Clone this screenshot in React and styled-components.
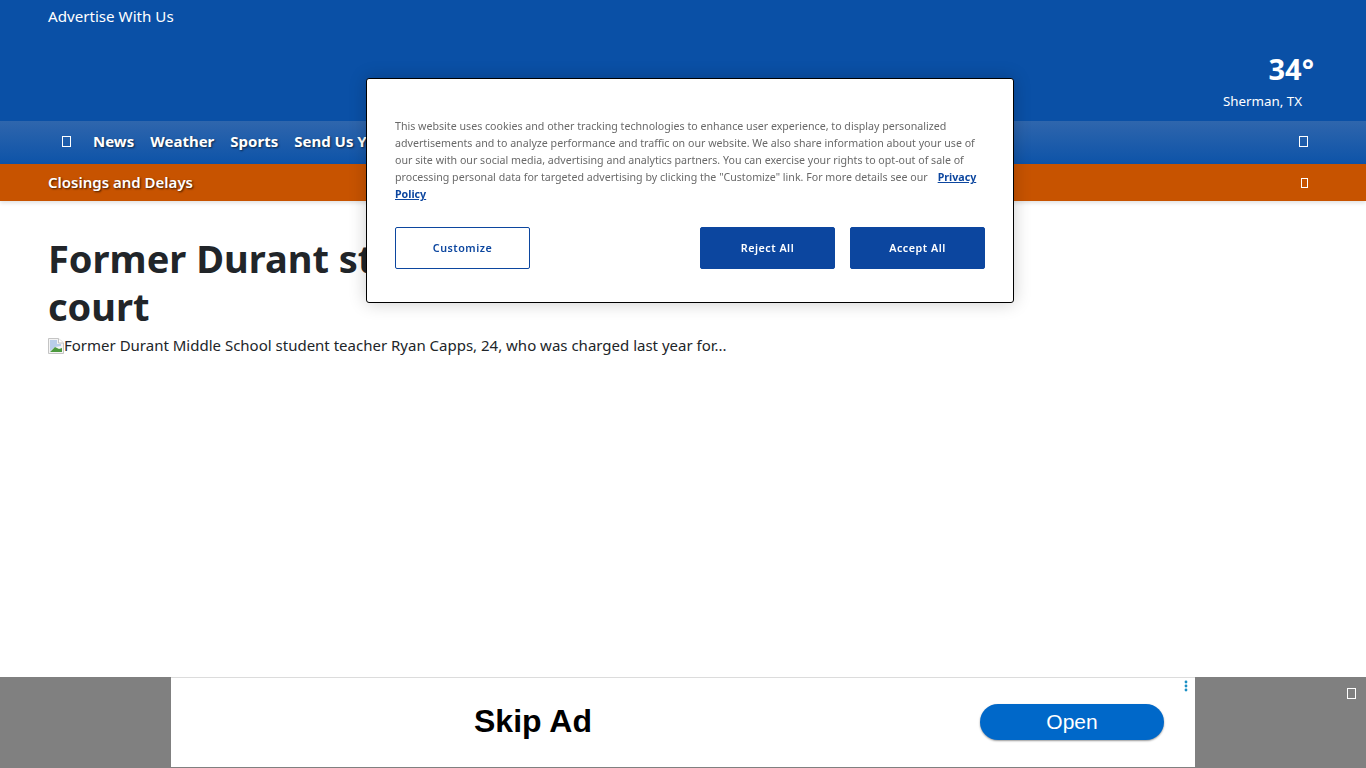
import React from "react";
import styled, { createGlobalStyle } from "styled-components";

const Global = createGlobalStyle`
  html, body { margin: 0; padding: 0; background: #fff; }
  body { font-family: "Noto Sans", "Open Sans", sans-serif; color: #212529; height: 768px; overflow: hidden; }
  * { box-sizing: border-box; }
`;

const Page = styled.div`
  display: flex;
  flex-direction: column;
  height: 768px;
`;

const TopHeader = styled.header`
  height: 121px;
  background: #0a50a6;
  display: flex;
  justify-content: space-between;
  color: #fff;
  padding: 0 52px 0 48px;
`;

const TopLink = styled.a`
  font-size: 15.15px;
  line-height: 20px;
  margin-top: 6px;
  height: 20px;
`;

const WeatherBox = styled.div`
  display: flex;
  flex-direction: column;
  align-items: flex-end;
  padding-top: 50px;
`;

const Temp = styled.div`
  font-size: 29px;
  line-height: 38px;
  font-weight: 700;
`;

const City = styled.div`
  font-size: 13.35px;
  line-height: 20px;
  margin-top: 3px;
  margin-right: 12px;
`;

const NavBar = styled.nav`
  height: 43px;
  background: linear-gradient(#2f66ad, #0d53a8);
  display: flex;
  align-items: center;
  padding: 0 58px 2px 62px;
  color: #fff;
`;

const NavList = styled.div`
  display: flex;
  align-items: center;
  gap: 16px;
  flex: 1;
`;

const NavIcon = styled.span`
  display: inline-block;
  width: 9px;
  height: 11px;
  border: 1px solid #fff;
  flex: none;
  margin-right: 6px;
`;

const NavItem = styled.a`
  font-size: 15px;
  font-weight: 700;
  line-height: 24px;
  margin-bottom: 2px;
  white-space: nowrap;
  text-shadow: 1px 1px 2px rgba(0, 0, 0, 0.6);
`;

const Tofu = styled.span`
  display: inline-block;
  width: ${(p) => p.$w || 9}px;
  height: ${(p) => p.$h || 11}px;
  border: 1px solid #fff;
  flex: none;
`;

const AlertBar = styled.div`
  height: 37px;
  background: #c75300;
  box-shadow: 0 2px 4px rgba(0, 0, 0, 0.12);
  display: flex;
  align-items: center;
  justify-content: space-between;
  padding: 0 58px 0 48px;
  color: #fff;
`;

const AlertText = styled.a`
  font-size: 15px;
  font-weight: 600;
  margin-bottom: 2px;
  text-shadow: 1px 1px 2px rgba(0, 0, 0, 0.7);
`;

const Main = styled.main`
  flex: 1;
  padding: 33px 48px 0;
`;

const Title = styled.h1`
  margin: 0;
  font-size: 38px;
  line-height: 48px;
  font-weight: 700;
  color: #212529;
`;

const Figure = styled.div`
  display: flex;
  align-items: flex-start;
  margin-top: 3px;
  font-size: 15px;
  line-height: 24px;
`;

const BrokenImage = styled.svg`
  width: 16px;
  height: 16px;
  margin-top: 5px;
  flex: none;
`;

const Modal = styled.div`
  position: fixed;
  left: 366px;
  top: 78px;
  width: 648px;
  height: 225px;
  background: #fff;
  border: 1px solid #000;
  border-radius: 3px;
  box-shadow: 0 0 18px rgba(0, 0, 0, 0.2);
  padding: 39px 28px 0;
  display: flex;
  flex-direction: column;
`;

const ModalText = styled.p`
  margin: 0;
  font-size: 10.65px;
  line-height: 17px;
  color: #696969;
  height: 85px;
`;

const PolicyLink = styled.a`
  color: #0c469f;
  font-weight: 700;
  text-decoration: underline;
  margin-left: 10px;
`;

const ButtonRow = styled.div`
  display: flex;
  justify-content: space-between;
  margin-top: 24px;
`;

const ButtonGroup = styled.div`
  display: flex;
  gap: 15px;
`;

const ModalButton = styled.button`
  width: 135px;
  height: 42px;
  border-radius: 2px;
  border: 1px solid #0c469f;
  background: ${(p) => (p.$solid ? "#0c469f" : "#fff")};
  color: ${(p) => (p.$solid ? "#fff" : "#0c469f")};
  font-family: inherit;
  font-size: 10.75px;
  font-weight: 600;
  letter-spacing: 0.5px;
  padding: 0;
`;

const AdBar = styled.div`
  position: fixed;
  left: 0;
  right: 0;
  bottom: 0;
  height: 91px;
  background: #808080;
  display: flex;
  justify-content: center;
`;

const AdPanel = styled.div`
  width: 1024px;
  height: 90px;
  background: #fff;
  border-top: 1px solid #dcdcdc;
  display: flex;
  align-items: center;
  justify-content: space-between;
  padding: 0 31px 2px 303px;
  font-family: "Liberation Sans", Arial, sans-serif;
`;

const SkipAd = styled.div`
  font-size: 32px;
  font-weight: 700;
  color: #000;
`;

const OpenButton = styled.div`
  width: 184px;
  height: 36px;
  border-radius: 18px;
  background: #0068c9;
  color: #fff;
  font-size: 21px;
  line-height: 36px;
  text-align: center;
  box-shadow: 0 1px 2px rgba(0, 0, 0, 0.4);
`;

const AdDots = styled.svg`
  position: absolute;
  left: 1184px;
  top: 3px;
  width: 4px;
  height: 12px;
`;

const AdClose = styled.div`
  position: absolute;
  right: 10px;
  top: 11px;
  display: flex;
`;

function Broken() {
  return (
    <BrokenImage viewBox="0 0 16 16">
      <path d="M.5.5h10L15.5 5v10.5H.5z" fill="#f4f4f4" stroke="#c4c4c4" />
      <path d="M10.5.5V5h5" fill="#fff" stroke="#c4c4c4" />
      <path d="M2 2h7v4h4v2L7 9l-5 4z" fill="#b9cdea" />
      <path d="M2 14l5-5 4 2 3-1v4z" fill="#4d9a3f" />
    </BrokenImage>
  );
}

export default function App() {
  return (
    <>
      <Global />
      <Page>
        <TopHeader>
          <TopLink>Advertise With Us</TopLink>
          <WeatherBox>
            <Temp>34°</Temp>
            <City>Sherman, TX</City>
          </WeatherBox>
        </TopHeader>
        <NavBar>
          <NavList>
            <NavIcon />
            <NavItem>News</NavItem>
            <NavItem>Weather</NavItem>
            <NavItem>Sports</NavItem>
            <NavItem>Send Us Your Photos</NavItem>
          </NavList>
          <Tofu />
        </NavBar>
        <AlertBar>
          <AlertText>Closings and Delays</AlertText>
          <Tofu $w={7} $h={10} />
        </AlertBar>
        <Main>
          <Title>
            Former Durant student teacher appears in
            <br />
            court
          </Title>
          <Figure>
            <Broken />
            Former Durant Middle School student teacher Ryan Capps, 24, who was charged last year for...
          </Figure>
        </Main>
      </Page>
      <Modal>
        <ModalText>
          This website uses cookies and other tracking technologies to enhance user experience, to display personalized
          advertisements and to analyze performance and traffic on our website. We also share information about your use of
          our site with our social media, advertising and analytics partners. You can exercise your rights to opt-out of sale of
          processing personal data for targeted advertising by clicking the "Customize" link. For more details see our
          <PolicyLink>Privacy Policy</PolicyLink>
        </ModalText>
        <ButtonRow>
          <ModalButton>Customize</ModalButton>
          <ButtonGroup>
            <ModalButton $solid>Reject All</ModalButton>
            <ModalButton $solid>Accept All</ModalButton>
          </ButtonGroup>
        </ButtonRow>
      </Modal>
      <AdBar>
        <AdPanel>
          <SkipAd>Skip Ad</SkipAd>
          <OpenButton>Open</OpenButton>
        </AdPanel>
        <AdDots viewBox="0 0 4 12">
          <circle cx="2" cy="2" r="1.4" fill="#1a8fc4" />
          <circle cx="2" cy="6" r="1.4" fill="#1a8fc4" />
          <circle cx="2" cy="10" r="1.4" fill="#1a8fc4" />
        </AdDots>
        <AdClose>
          <Tofu />
        </AdClose>
      </AdBar>
    </>
  );
}
